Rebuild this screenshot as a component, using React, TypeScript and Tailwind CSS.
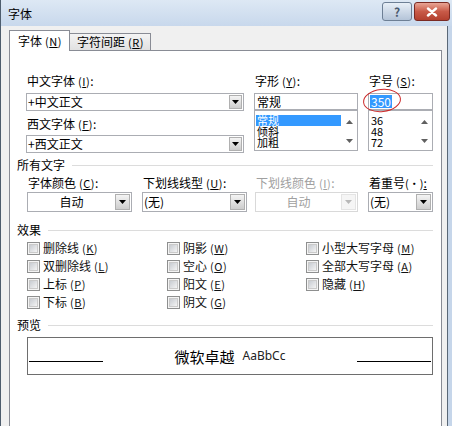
import React from "react";

const M = ({ k }: { k: string }) => (
  <span className="text-[11px] ml-[3px] tracking-[0.5px]">
    (<span className="underline underline-offset-1">{k}</span>)
  </span>
);

function Arrow({ color = "#000" }: { color?: string }) {
  return (
    <svg width="7" height="4" viewBox="0 0 7 4">
      <path d="M0 0H7L3.5 4Z" fill={color} />
    </svg>
  );
}

function UpArrow({ color = "#606060" }: { color?: string }) {
  return (
    <svg width="7" height="4" viewBox="0 0 7 4">
      <path d="M0 4H7L3.5 0Z" fill={color} />
    </svg>
  );
}

function DropBtn({ big, disabled }: { big?: boolean; disabled?: boolean }) {
  return (
    <div
      className={`${big ? "w-[15px] h-[16px]" : "w-[13px] h-[14px]"} mr-[1px] shrink-0 flex items-center justify-center border ${
        disabled
          ? "border-[#e4e4e4] bg-[#f5f5f5]"
          : "border-[#b0b0b0] bg-gradient-to-b from-[#f4f4f4] to-[#cdcdcd]"
      }`}
    >
      <Arrow color={disabled ? "#b8b8b8" : "#000"} />
    </div>
  );
}

function Combo({
  cls,
  text,
  center,
  disabled,
  big,
}: {
  cls: string;
  text: string;
  center?: boolean;
  disabled?: boolean;
  big?: boolean;
}) {
  return (
    <div
      className={`${cls} bg-white border ${
        disabled ? "border-[#d9d9d9]" : "border-[#abadb3]"
      } flex items-center`}
    >
      <div
        className={`flex-1 ${center ? "text-center" : "pl-[1px]"} ${
          disabled ? "text-[#a0a0a0]" : "text-black"
        } text-[12px] leading-none whitespace-nowrap`}
      >
        {text}
      </div>
      <DropBtn big={big} disabled={disabled} />
    </div>
  );
}

function ListBox({ items, selected }: { items: string[]; selected?: number }) {
  return (
    <div className="h-[41px] border border-[#abadb3] bg-white flex">
      <div className="flex-1 pt-[4px] pl-[1px]">
        {items.map((it, i) => (
          <div
            key={i}
            className={`h-[11px] leading-[11px] text-[11px] pl-[1px] ${
              i === selected ? "bg-[#3399ff] text-white" : "text-black"
            }`}
          >
            {it}
          </div>
        ))}
      </div>
      <div className="w-[16px] flex flex-col justify-between items-center pt-[9px] pb-[7px]">
        <UpArrow />
        <Arrow color="#606060" />
      </div>
    </div>
  );
}

function Label({ text, k, disabled, tail }: { text: string; k: string; disabled?: boolean; tail?: string }) {
  return (
    <div
      className={`h-[14px] leading-[14px] text-[12px] pl-[1px] whitespace-nowrap ${
        disabled ? "text-[#a0a0a0]" : "text-black"
      }`}
    >
      {text}
      <M k={k} />
      {tail ?? ":"}
    </div>
  );
}

function Sec({ title }: { title: string }) {
  return (
    <div className="flex items-center h-[14px]">
      <span className="text-[12px] leading-none">{title}</span>
      <div className="flex-1 ml-[7px] h-[1px] bg-[#dcdcdc]" />
    </div>
  );
}

function Check({ label, k }: { label: string; k: string }) {
  return (
    <div className="h-[18px] flex items-center">
      <div className="w-[13px] h-[13px] border border-[#8e8f8f] bg-[#f4f4f4] flex items-center justify-center">
        <div className="w-[9px] h-[9px] bg-gradient-to-br from-[#c8ccd2] to-[#f4f4f4] border border-[#cacaca]" />
      </div>
      <span className="ml-[3px] text-[12px] leading-none text-[#111]">
        {label}
        <M k={k} />
      </span>
    </div>
  );
}

export default function App() {
  return (
    <div className="w-[452px] h-[426px] overflow-hidden flex flex-col bg-[#c6d6ea] font-['Noto_Sans_CJK_SC',sans-serif] text-black">
      {/* Title bar */}
      <div className="h-[26px] shrink-0 flex items-start bg-gradient-to-b from-[#dde8f4] to-[#c8d8ec] border-l border-[#4e5d6d]">
        <div className="pl-[7px] pt-[7px] text-[12px] leading-[14px]">字体</div>
        <div className="ml-auto mt-[2px] mr-[2px] flex gap-[2px]">
          <div className="w-[30px] h-[19px] rounded-[3px] border border-[#6d7f95] bg-gradient-to-b from-[#e8eff7] to-[#b4c4d8] flex items-center justify-center text-[12px] font-bold text-[#4a5a6e] leading-none">
            ?
          </div>
          <div className="w-[36px] h-[19px] rounded-[3px] border border-[#7a2a23] bg-gradient-to-b from-[#e8a495] via-[#c85a48] to-[#b3402f] flex items-center justify-center">
            <svg width="12" height="10" viewBox="0 0 12 10">
              <path d="M2 1.5L10 8.5M10 1.5L2 8.5" stroke="#fff" strokeWidth="2.4" strokeLinecap="round" />
            </svg>
          </div>
        </div>
      </div>

      {/* Body */}
      <div className="flex-1 flex min-h-0">
        <div className="w-[1px] bg-[#4e5d6d]" />
        <div className="w-[446px] bg-[#f0f0f0] flex flex-col pl-[8px] pr-[5px]">
          {/* Tabs */}
          <div className="h-[24px] shrink-0 flex items-end">
            <div className="relative z-10 w-[61px] h-[21px] -mb-[1px] bg-white border border-b-0 border-[#898c95] flex items-center pl-[8px] text-[12px] leading-none">
              字体
              <M k="N" />
            </div>
            <div className="w-[81px] h-[17px] border border-l-0 border-b-0 border-[#898c95] bg-gradient-to-b from-[#f4f4f4] to-[#e1e1e1] flex items-center pl-[7px] text-[12px] leading-none">
              字符间距
              <M k="R" />
            </div>
          </div>

          {/* Panel */}
          <div className="flex-1 w-[433px] bg-white border border-b-0 border-[#898c95] flex flex-col pl-[7px] pr-[8px]">
            {/* Top row */}
            <div className="mt-[23px] ml-[9px] flex gap-[10px]">
              <div className="w-[218px] flex flex-col">
                <Label text="中文字体" k="I" />
                <div className="mt-[5px]">
                  <Combo cls="w-[218px] h-[18px]" text="+中文正文" />
                </div>
                <div className="mt-[6px]">
                  <Label text="西文字体" k="F" />
                </div>
                <div className="mt-[4px]">
                  <Combo cls="w-[218px] h-[18px]" text="+西文正文" />
                </div>
              </div>
              <div className="w-[104px] flex flex-col">
                <Label text="字形" k="Y" />
                <div className="mt-[5px] h-[17px] border border-[#abadb3] bg-white flex items-center pl-[2px] text-[12px] leading-none">
                  常规
                </div>
                <ListBox items={["常规", "倾斜", "加粗"]} selected={0} />
              </div>
              <div className="relative w-[65px] flex flex-col">
                <Label text="字号" k="S" />
                <div className="mt-[5px] h-[17px] border border-[#abadb3] bg-white flex items-center pl-[1px]">
                  <span className="bg-[#3399ff] text-white text-[12px] leading-[13px] px-[1px]">350</span>
                </div>
                <ListBox items={["36", "48", "72"]} />
                <div className="absolute left-[-5px] top-[15px] w-[38px] h-[23px] rounded-[50%] border border-[#cc2a2a] -rotate-[6deg]" />
              </div>
            </div>

            {/* 所有文字 */}
            <div className="mt-[5px]">
              <Sec title="所有文字" />
            </div>
            <div className="mt-[4px] ml-[10px] flex">
              <div className="w-[105px] flex flex-col">
                <Label text="字体颜色" k="C" />
                <div className="mt-[2px]">
                  <Combo cls="w-[105px] h-[20px]" text="自动" center big />
                </div>
              </div>
              <div className="ml-[10px] w-[105px] flex flex-col">
                <Label text="下划线线型" k="U" />
                <div className="mt-[2px]">
                  <Combo cls="w-[105px] h-[20px]" text="(无)" big />
                </div>
              </div>
              <div className="ml-[8px] w-[103px] flex flex-col">
                <Label text="下划线颜色" k="I" disabled />
                <div className="mt-[2px]">
                  <Combo cls="w-[103px] h-[20px]" text="自动" center big disabled />
                </div>
              </div>
              <div className="ml-[10px] w-[65px] flex flex-col">
                <div className="h-[14px] leading-[14px] text-[12px] pl-[1px] whitespace-nowrap">
                  着重号<span className="text-[11px]">(·)</span>
                  <span className="underline">:</span>
                </div>
                <div className="mt-[2px]">
                  <Combo cls="w-[65px] h-[20px]" text="(无)" big />
                </div>
              </div>
            </div>

            {/* 效果 */}
            <div className="mt-[11px]">
              <Sec title="效果" />
            </div>
            <div className="mt-[2px] ml-[10px] flex">
              <div className="w-[140px] flex flex-col">
                <Check label="删除线" k="K" />
                <Check label="双删除线" k="L" />
                <Check label="上标" k="P" />
                <Check label="下标" k="B" />
              </div>
              <div className="w-[139px] flex flex-col">
                <Check label="阴影" k="W" />
                <Check label="空心" k="O" />
                <Check label="阳文" k="E" />
                <Check label="阴文" k="G" />
              </div>
              <div className="flex-1 flex flex-col">
                <Check label="小型大写字母" k="M" />
                <Check label="全部大写字母" k="A" />
                <Check label="隐藏" k="H" />
              </div>
            </div>

            {/* 预览 */}
            <div className="mt-[7px]">
              <Sec title="预览" />
            </div>
            <div className="mt-[5px] ml-[10px] w-[406px] h-[38px] border border-[#6e6e6e] flex px-[1px]">
              <div className="self-start mt-[23px] w-[74px] h-[1px] bg-black" />
              <div className="flex-1 flex items-center justify-center">
                <span className="text-[15px] leading-none font-normal">微软卓越</span>
                <span className="ml-[8px] text-[12px] leading-none font-['Noto_Sans',sans-serif] text-[#222]">AaBbCc</span>
              </div>
              <div className="self-start mt-[23px] w-[74px] h-[1px] bg-black" />
            </div>
          </div>
        </div>
        <div className="w-[1px] bg-[#5a6877]" />
        <div className="flex-1" />
      </div>
    </div>
  );
}
